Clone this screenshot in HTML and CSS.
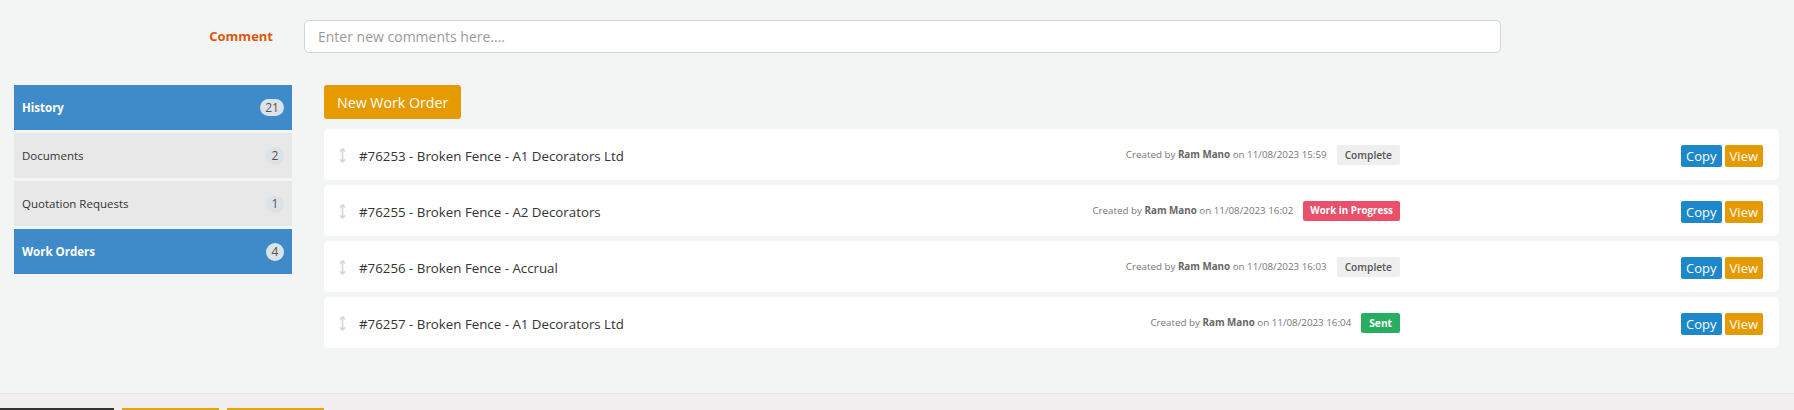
FILE: index.html
```html
<!DOCTYPE html>
<html>
<head>
<meta charset="utf-8">
<link rel="stylesheet" href="styles.css">
</head>
<body>
<div class="page">
  <div class="comment-row">
    <label class="comment-label">Comment</label>
    <input class="comment-input" type="text" placeholder="Enter new comments here....">
  </div>
  <div class="main">
    <ul class="side">
      <li class="side-item active"><span>History</span><span class="count wide">21</span></li>
      <li class="side-item"><span>Documents</span><span class="count">2</span></li>
      <li class="side-item"><span>Quotation Requests</span><span class="count">1</span></li>
      <li class="side-item active"><span>Work Orders</span><span class="count">4</span></li>
    </ul>
    <div class="content">
      <button class="btn-new">New Work Order</button>
      <div class="rows">
        <div class="wo-row">
          <svg class="handle" width="7" height="15" viewBox="0 0 7 15"><path d="M3.5 1 L3.5 14 M1 3.5 L3.5 1 L6 3.5 M1 11.5 L3.5 14 L6 11.5" fill="none" stroke="#d4d4d4" stroke-width="1.6"/></svg>
          <span class="title">#76253 - Broken Fence - A1 Decorators Ltd</span>
          <div class="meta">Created by <b>Ram Mano</b> on 11/08/2023 15:59<span class="tag tag-grey">Complete</span></div>
          <div class="actions"><button class="btn btn-copy">Copy</button><button class="btn btn-view">View</button></div>
        </div>
        <div class="wo-row">
          <svg class="handle" width="7" height="15" viewBox="0 0 7 15"><path d="M3.5 1 L3.5 14 M1 3.5 L3.5 1 L6 3.5 M1 11.5 L3.5 14 L6 11.5" fill="none" stroke="#d4d4d4" stroke-width="1.6"/></svg>
          <span class="title">#76255 - Broken Fence - A2 Decorators</span>
          <div class="meta">Created by <b>Ram Mano</b> on 11/08/2023 16:02<span class="tag tag-red">Work in Progress</span></div>
          <div class="actions"><button class="btn btn-copy">Copy</button><button class="btn btn-view">View</button></div>
        </div>
        <div class="wo-row">
          <svg class="handle" width="7" height="15" viewBox="0 0 7 15"><path d="M3.5 1 L3.5 14 M1 3.5 L3.5 1 L6 3.5 M1 11.5 L3.5 14 L6 11.5" fill="none" stroke="#d4d4d4" stroke-width="1.6"/></svg>
          <span class="title">#76256 - Broken Fence - Accrual</span>
          <div class="meta">Created by <b>Ram Mano</b> on 11/08/2023 16:03<span class="tag tag-grey">Complete</span></div>
          <div class="actions"><button class="btn btn-copy">Copy</button><button class="btn btn-view">View</button></div>
        </div>
        <div class="wo-row">
          <svg class="handle" width="7" height="15" viewBox="0 0 7 15"><path d="M3.5 1 L3.5 14 M1 3.5 L3.5 1 L6 3.5 M1 11.5 L3.5 14 L6 11.5" fill="none" stroke="#d4d4d4" stroke-width="1.6"/></svg>
          <span class="title">#76257 - Broken Fence - A1 Decorators Ltd</span>
          <div class="meta">Created by <b>Ram Mano</b> on 11/08/2023 16:04<span class="tag tag-green">Sent</span></div>
          <div class="actions"><button class="btn btn-copy">Copy</button><button class="btn btn-view">View</button></div>
        </div>
      </div>
    </div>
  </div>
</div>
<div class="footer">
  <div class="ftab ftab-dark"></div>
  <div class="ftab ftab-orange"></div>
  <div class="ftab ftab-orange"></div>
</div>
</body>
</html>
```
FILE: styles.css
```css
* { box-sizing: border-box; }
html, body { margin: 0; padding: 0; }
body {
  background: #f1eff0;
  font-family: "Open Sans", "Noto Sans", sans-serif;
  color: #333;
  overflow: hidden;
}
.page {
  background: #f3f4f4;
  height: 394px;
  border-bottom: 1px solid #e2e2e2;
  padding-top: 20px;
}
.comment-row {
  display: flex;
  align-items: center;
  height: 33px;
}
.comment-label {
  width: 273px;
  text-align: right;
  font-weight: 700;
  font-size: 13px;
  color: #d8580c;
  margin-right: 31px;
  position: relative;
  top: -1px;
}
.comment-input {
  width: 1197px;
  height: 33px;
  border: 1px solid #cbd6e5;
  border-radius: 5px;
  background: #fff;
  padding: 0 13px;
  font-family: "Open Sans", "Noto Sans", sans-serif;
  font-size: 14px;
  color: #333;
  outline: none;
}
.comment-input::placeholder { color: #9a9a9a; }
.main {
  display: flex;
  margin-top: 32px;
}
.side {
  list-style: none;
  margin: 0 0 0 14px;
  padding: 0;
  width: 278px;
  display: flex;
  flex-direction: column;
  gap: 3px;
}
.side-item {
  height: 45px;
  display: flex;
  align-items: center;
  justify-content: space-between;
  padding: 0 8px 0 8px;
  background: #e8e8e8;
  font-size: 11.5px;
  color: #333;
}
.side-item.active {
  background: #3f8ac9;
  color: #fff;
  font-weight: 700;
}
.count {
  min-width: 18px;
  height: 18px;
  border-radius: 9px;
  background: #dbe2e8;
  color: #555;
  font-size: 12px;
  font-weight: 400;
  display: flex;
  align-items: center;
  justify-content: center;
  padding: 0 4px;
}
.count.wide { min-width: 24px; height: 17px; }
.content {
  margin-left: 32px;
  width: 1455px;
}
.btn-new {
  display: block;
  height: 34px;
  padding: 0 13px;
  border: none;
  border-radius: 3px;
  background: #e59a00;
  color: #fff;
  font-family: "Open Sans", "Noto Sans", sans-serif;
  font-size: 14.2px;
}
.rows {
  margin-top: 10px;
  display: flex;
  flex-direction: column;
  gap: 5px;
}
.wo-row {
  height: 51px;
  background: #fff;
  border-radius: 5px;
  display: flex;
  align-items: center;
  padding: 0 16px 0 15px;
}
.handle { flex: none; margin-right: 13px; margin-top: 2px; }
.title {
  flex: 1;
  font-size: 13.3px;
  color: #333;
  position: relative;
  top: 1px;
}
.meta {
  flex: none;
  display: flex;
  align-items: center;
  font-size: 9.8px;
  color: #777;
  white-space: pre;
}
.meta b { color: #666; font-weight: 700; }
.tag {
  margin-left: 10px;
  height: 20px;
  padding: 0 8px;
  border-radius: 2px;
  display: flex;
  align-items: center;
  font-size: 10.2px;
  font-weight: 600;
}
.tag-grey { background: #efefef; color: #555; }
.tag-red { background: #e9506a; color: #fff; font-weight: 700; padding: 0 7px; font-size: 9.8px; }
.tag-green { background: #27ae60; color: #fff; font-weight: 700; }
.actions {
  flex: none;
  width: 363px;
  display: flex;
  justify-content: flex-end;
  gap: 3px;
  padding-top: 3px;
}
.btn {
  height: 22px;
  padding: 0 5px;
  border: none;
  border-radius: 2px;
  color: #fff;
  font-family: "Open Sans", "Noto Sans", sans-serif;
  font-size: 13px;
}
.btn-copy { background: #1d87c9; }
.btn-view { background: #e59a00; }
.footer {
  display: flex;
  gap: 8px;
  padding-top: 14px;
}
.ftab { height: 10px; }
.ftab-dark { width: 114px; background: #333; }
.ftab-orange { width: 97px; background: #e8a20a; }
```
